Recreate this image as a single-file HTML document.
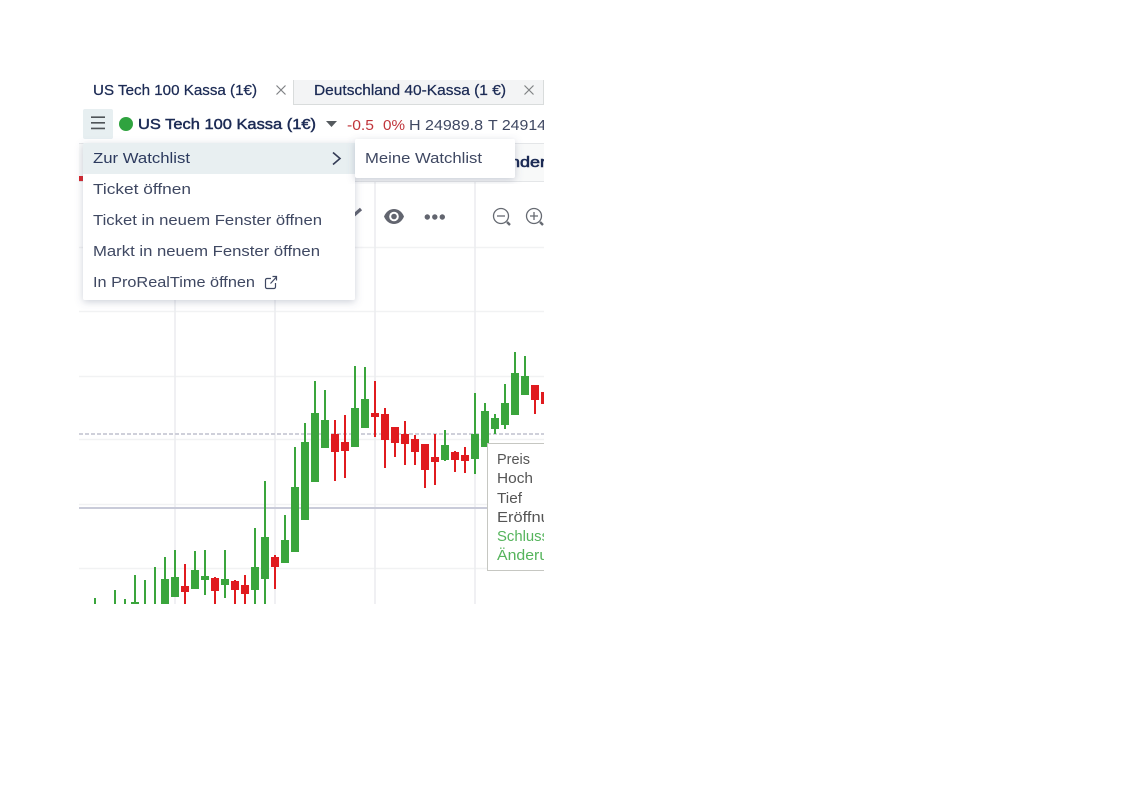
<!DOCTYPE html>
<html><head><meta charset="utf-8"><title>Chart</title>
<style>
html,body{margin:0;padding:0;background:#fff;width:1122px;height:793px;overflow:hidden}
svg{position:absolute;left:0;top:0;display:block;filter:blur(.3px)}
text{font-family:"Liberation Sans",sans-serif;font-size:14.5px;white-space:pre}
.m{fill:#3f4862}
.h{fill:#1c2b55;stroke:#1c2b55;stroke-width:.25}
.t{fill:#555}
.g{fill:#55b45c}
</style></head><body>
<svg width="1122" height="793" viewBox="0 0 1122 793" xmlns="http://www.w3.org/2000/svg">
<defs>
<clipPath id="c"><rect x="79" y="80" width="465" height="524"/></clipPath>
<clipPath id="tt"><rect x="487" y="440" width="57" height="140"/></clipPath>
<filter id="s" x="-15%" y="-15%" width="130%" height="130%"><feDropShadow dx="0" dy="2" stdDeviation="4" flood-color="#5a6480" flood-opacity=".3"/></filter>
</defs>
<g clip-path="url(#c)">
<!-- header -->
<rect x="79" y="80" width="214" height="25" fill="#fff"/>
<rect x="294" y="80" width="250" height="24" fill="#f3f4f5"/>
<path d="M293.500 80V104.500H544M543.500 80V104" fill="none" stroke="#d9dcdc"/>
<text x="93" y="95" class="h" textLength="164" lengthAdjust="spacingAndGlyphs">US Tech 100 Kassa (1€)</text>
<text x="314" y="95" class="h" textLength="192" lengthAdjust="spacingAndGlyphs">Deutschland 40-Kassa (1 €)</text>
<path d="M276.500 85.500L285.500 94.500M285.500 85.500L276.500 94.500M524.500 85.500L533.500 94.500M533.500 85.500L524.500 94.500" stroke="#808285" stroke-width="1.200" fill="none"/>
<rect x="83" y="109" width="30" height="30" rx="2" fill="#e7eff1"/>
<path d="M91 117.200H105M91 122.800H105M91 128.400H105" stroke="#4f5458" stroke-width="1.600"/>
<circle cx="126" cy="124" r="7" fill="#2fa33f"/>
<text x="138" y="129" class="h" style="stroke-width:.45" textLength="178" lengthAdjust="spacingAndGlyphs">US Tech 100 Kassa (1€)</text>
<path d="M326 121H337L331.500 127Z" fill="#555a5e"/>
<text x="347" y="130" fill="#c0343a" textLength="27" lengthAdjust="spacingAndGlyphs">-0.5</text>
<text x="383" y="130" fill="#c0343a" textLength="22" lengthAdjust="spacingAndGlyphs">0%</text>
<text x="409" y="130" fill="#3f4862" textLength="74" lengthAdjust="spacingAndGlyphs">H 24989.8</text>
<text x="488" y="130" fill="#3f4862" textLength="58" lengthAdjust="spacingAndGlyphs">T 24914</text>
<!-- sub bar -->
<rect x="79" y="143" width="465" height="38" fill="#f8f9f9"/>
<path d="M79 143.500H544M79 181.500H544" stroke="#e4e6e8"/>
<rect x="79" y="176" width="5" height="5" fill="#d8232a"/>
<text x="510" y="167" class="h" style="stroke-width:.6" textLength="36" lengthAdjust="spacingAndGlyphs">nder</text>
<!-- grid -->
<path d="M79 247.500H544M79 311.500H544M79 376.500H544M79 439.500H544M79 504.500H544M79 568.500H544" stroke="#f1f2f3" stroke-width="1.500"/>
<path d="M175 182V604M275 182V604M375 182V604M475 182V604" stroke="#ecedf0" stroke-width="1.600"/>
<!-- toolbar icons -->
<path d="M353 216L361 209" stroke="#5f6270" stroke-width="3.200"/>
<path d="M384 216.500C388 206.500 400 206.500 404 216.500C400 226.500 388 226.500 384 216.500Z" fill="#62656f"/>
<circle cx="394" cy="216.500" r="4.800" fill="#fff"/><circle cx="394" cy="216.500" r="2.800" fill="#62656f"/>
<circle cx="427.300" cy="217" r="2.700" fill="#62656f"/><circle cx="434.800" cy="217" r="2.700" fill="#62656f"/><circle cx="442.300" cy="217" r="2.700" fill="#62656f"/>
<g fill="none" stroke="#666a72" stroke-width="1.300"><circle cx="501" cy="216" r="7.500"/><path d="M497 216H505"/><circle cx="534" cy="216" r="7.500"/><path d="M530 216H538M534 212V220"/></g>
<path d="M507 222L510 225M540 222L543 225" stroke="#666a72" stroke-width="2.400"/>
<!-- price lines -->
<path d="M79 434H544" stroke="#cfd0da" stroke-width="2" stroke-dasharray="4 2"/>
<path d="M79 508H544" stroke="#c9cbd9" stroke-width="2"/>
<!-- candles -->
<path fill="none" stroke="#3aa53c" stroke-width="2" d="M95 598V604M115 590V604M125 599V604M135 575V604M145 580V604M155 567V604M165 557V604M175 550V597M195 551V589M205 550V595M225 550V598M255 528V604M265 481V604M285 515V563M295 447V552M305 423V520M315 381V482M325 390V448M355 366V447M365 367V428M445 430V461M475 393V474M485 403V447M495 414V434M505 384V429M515 352V415M525 356V395"/>
<path fill="none" stroke="#3aa53c" stroke-width="8" d="M135 602V604M165 579V604M175 577V597M195 570V589M205 576V580M225 579V585M255 567V590M265 537V579M285 540V563M295 487V552M305 442V520M315 413V482M325 420V448M355 408V447M365 399V428M445 445V460M475 434V459M485 411V447M495 418V429M505 403V425M515 373V415M525 376V395"/>
<path fill="none" stroke="#e01b1f" stroke-width="2" d="M185 564V604M215 577V604M235 580V604M245 575V604M275 555V589M335 420V481M345 415V478M375 381V437M385 408V468M395 427V457M405 421V465M415 435V465M425 444V488M435 434V485M455 451V472M465 447V473M535 385V414M545 392V404"/>
<path fill="none" stroke="#e01b1f" stroke-width="8" d="M185 586V592M215 578V591M235 581V590M245 585V594M275 557V567M335 434V452M345 442V451M375 413V417M385 414V440M395 427V443M405 434V444M415 439V452M425 444V470M435 457V462M455 452V460M465 455V461M535 385V400M545 392V404"/>
<!-- tooltip -->
<rect x="487.500" y="443.500" width="70" height="127" fill="#fff" stroke="#c6c7c2"/>
<g clip-path="url(#tt)">
<text x="497" y="464" class="t" textLength="33" lengthAdjust="spacingAndGlyphs">Preis</text>
<text x="497" y="483" class="t" textLength="36" lengthAdjust="spacingAndGlyphs">Hoch</text>
<text x="497" y="503" class="t" textLength="25" lengthAdjust="spacingAndGlyphs">Tief</text>
<text x="497" y="522" class="t" textLength="62" lengthAdjust="spacingAndGlyphs">Eröffnun</text>
<text x="497" y="541" class="g" textLength="52" lengthAdjust="spacingAndGlyphs">Schluss</text>
<text x="497" y="560" class="g" textLength="60" lengthAdjust="spacingAndGlyphs">Änderun</text>
</g>
</g>
<!-- menu -->
<rect x="83" y="143" width="272" height="157" rx="2" fill="#fff" filter="url(#s)"/>
<path d="M83 174V145a2 2 0 0 1 2-2H355V174Z" fill="#e8eff1"/>
<rect x="355" y="139" width="160" height="39" rx="2" fill="#fff" filter="url(#s)"/>
<text x="93" y="163" class="m" style="fill:#2c3a5e" textLength="97" lengthAdjust="spacingAndGlyphs">Zur Watchlist</text>
<text x="93" y="194" class="m" textLength="98" lengthAdjust="spacingAndGlyphs">Ticket öffnen</text>
<text x="93" y="225" class="m" textLength="229" lengthAdjust="spacingAndGlyphs">Ticket in neuem Fenster öffnen</text>
<text x="93" y="256" class="m" textLength="227" lengthAdjust="spacingAndGlyphs">Markt in neuem Fenster öffnen</text>
<text x="93" y="287" class="m" textLength="162" lengthAdjust="spacingAndGlyphs">In ProRealTime öffnen</text>
<text x="365" y="163" class="m" textLength="117" lengthAdjust="spacingAndGlyphs">Meine Watchlist</text>
<path d="M333 152.500L340 158.500L333 164.500" fill="none" stroke="#333b55" stroke-width="1.600"/>
<path d="M271 278.500H267A1.500 1.500 0 0 0 265.500 280V287A1.500 1.500 0 0 0 267 288.500H274A1.500 1.500 0 0 0 275.500 287V283M270.500 283.500L276.500 277M272.500 276.500H276.500V280.500" fill="none" stroke="#3f4862" stroke-width="1.200"/>
</svg>
</body></html>
